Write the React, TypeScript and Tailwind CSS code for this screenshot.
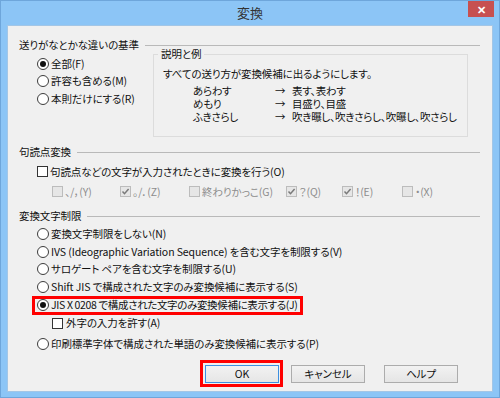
import React from "react";

const font = "font-['Noto_Sans_CJK_JP','Noto_Sans',sans-serif] [font-feature-settings:'palt']";

function Radio({ checked = false }: { checked?: boolean }) {
  return (
    <span className="w-[12px] h-[12px] rounded-full border border-[#3c3c3c] bg-white flex items-center justify-center shrink-0">
      {checked && <span className="w-[6px] h-[6px] rounded-full bg-[#111]" />}
    </span>
  );
}

function Check({ checked = false, disabled = false }: { checked?: boolean; disabled?: boolean }) {
  return (
    <span
      className={
        disabled
          ? "w-[11px] h-[11px] border border-[#bcbcbc] bg-[#e6e6e6] flex items-center justify-center shrink-0"
          : "w-[11px] h-[11px] border border-[#333] bg-white flex items-center justify-center shrink-0"
      }
    >
      {checked && (
        <svg width="9" height="9" viewBox="0 0 9 9">
          <path d="M1.5 4.5 L3.5 6.7 L7.6 2" fill="none" stroke={disabled ? "#7a7a7a" : "#222"} strokeWidth="1.5" />
        </svg>
      )}
    </span>
  );
}

function SectionHead({ children }: { children: React.ReactNode }) {
  return (
    <div className="flex items-center h-[14px]">
      <span className="whitespace-nowrap">{children}</span>
      <span className="flex-1 h-px bg-[#b9b9b9] ml-[6px]" />
    </div>
  );
}

function RadioRow({ label, checked = false }: { label: string; checked?: boolean }) {
  return (
    <div className="flex items-center h-[17.5px] pl-[18px] gap-[2px]">
      <Radio checked={checked} />
      <span className="whitespace-nowrap">{label}</span>
    </div>
  );
}

const subItems = [
  { label: "、/，(Y)", checked: false, w: "w-[68px]" },
  { label: "。/．(Z)", checked: true, w: "w-[69px]" },
  { label: "終わりかっこ(G)", checked: false, w: "w-[97px]" },
  { label: "？(Q)", checked: true, w: "w-[56px]" },
  { label: "！(E)", checked: true, w: "w-[60px]" },
  { label: "・(X)", checked: false, w: "w-[60px]" },
];

const examples = [
  ["あらわす", "表す、表わす"],
  ["めもり", "目盛り、目盛"],
  ["ふきさらし", "吹き曝し、吹きさらし、吹曝し、吹さらし"],
];

export default function App() {
  return (
    <div className={`relative w-[500px] h-[398px] bg-[#8cc5f6] border border-[#6ea6db] text-[10.5px] tracking-[-0.1px] text-[#111] ${font}`}>
      {/* Title bar */}
      <div className="h-[24px] flex items-center justify-center text-[13px] tracking-normal text-[#333]">変換</div>
      <div className="absolute top-0 right-[5px] w-[26px] h-[16px] bg-[#c75050] flex items-center justify-center text-white text-[11px] font-bold">
        ✕
      </div>

      {/* Client area */}
      <div className="mx-[6px] h-[367px] bg-[#f0f0f0] border border-[#a3c6e6] pl-[11px] pr-[12px] pt-[12px]">
        {/* 送りがな */}
        <SectionHead>送りがなとかな違いの基準</SectionHead>
        <div className="flex">
          <div className="w-[134px] pt-[3px]">
            <RadioRow label="全部(F)" checked />
            <RadioRow label="許容も含める(M)" />
            <RadioRow label="本則だけにする(R)" />
          </div>
          <div className="relative mt-[2px] w-[315px] h-[83px] border border-[#dcdcdc] pl-[9px] pt-[12px]">
            <span className="absolute -top-[8px] left-[4px] px-[3px] bg-[#f0f0f0] leading-[14px]">説明と例</span>
            <div className="h-[13px] leading-[13px]">すべての送り方が変換候補に出るようにします。</div>
            <div className="mt-[4px] tracking-[-0.25px]">
              {examples.map(([a, b]) => (
                <div key={a} className="flex h-[13px] leading-[13px]">
                  <span className="w-[112px] pl-[30px]">{a}</span>
                  <span className="w-[17px]">→</span>
                  <span className="whitespace-nowrap">{b}</span>
                </div>
              ))}
            </div>
          </div>
        </div>

        {/* 句読点変換 */}
        <div className="mt-[8px]">
          <SectionHead>句読点変換</SectionHead>
        </div>
        <div className="mt-[4px] flex items-center h-[17px] pl-[18px] gap-[2px]">
          <Check />
          <span>句読点などの文字が入力されたときに変換を行う(O)</span>
        </div>
        <div className="mt-[3px] flex items-center h-[17px] pl-[33px] text-[#8d8d8d]">
          {subItems.map((s) => (
            <div key={s.label} className={`flex items-center gap-[2px] ${s.w}`}>
              <Check checked={s.checked} disabled />
              <span className="whitespace-nowrap">{s.label}</span>
            </div>
          ))}
        </div>

        {/* 変換文字制限 */}
        <div className="mt-[9px]">
          <SectionHead>変換文字制限</SectionHead>
        </div>
        <div className="mt-[2.5px]">
          <RadioRow label="変換文字制限をしない(N)" />
          <RadioRow label="IVS (Ideographic Variation Sequence) を含む文字を制限する(V)" />
          <RadioRow label="サロゲート ペアを含む文字を制限する(U)" />
          <RadioRow label="Shift JIS で構成された文字のみ変換候補に表示する(S)" />
          <div className="ml-[13px] w-[271px] h-[19px] border-[3px] border-[#ff0000] flex items-center pl-[2px] gap-[2px]">
            <Radio checked />
            <span className="whitespace-nowrap tracking-[-0.35px]">JIS X 0208 で構成された文字のみ変換候補に表示する(J)</span>
          </div>
          <div className="flex items-center h-[17px] pl-[33px] gap-[3px]">
            <Check />
            <span>外字の入力を許す(A)</span>
          </div>
          <div className="mt-[4px]">
            <RadioRow label="印刷標準字体で構成された単語のみ変換候補に表示する(P)" />
          </div>
        </div>

        {/* Buttons */}
        <div className="mt-[6.5px] flex items-start pl-[181px]">
          <div className="border-[3px] border-[#ff0000] pt-[2px] pl-[2px] pr-[1px] pb-[1px]">
            <button className="w-[74px] h-[18px] border border-[#3c8fe0] bg-gradient-to-b from-[#f2f2f2] to-[#e6e6e6] flex items-center justify-center">
              OK
            </button>
          </div>
          <button className="ml-[8px] mt-[5px] w-[74px] h-[18px] border border-[#acacac] bg-gradient-to-b from-[#f2f2f2] to-[#e5e5e5] flex items-center justify-center">
            キャンセル
          </button>
          <button className="ml-[19px] mt-[5px] w-[74px] h-[18px] border border-[#acacac] bg-gradient-to-b from-[#f2f2f2] to-[#e5e5e5] flex items-center justify-center">
            ヘルプ
          </button>
        </div>
      </div>
    </div>
  );
}
